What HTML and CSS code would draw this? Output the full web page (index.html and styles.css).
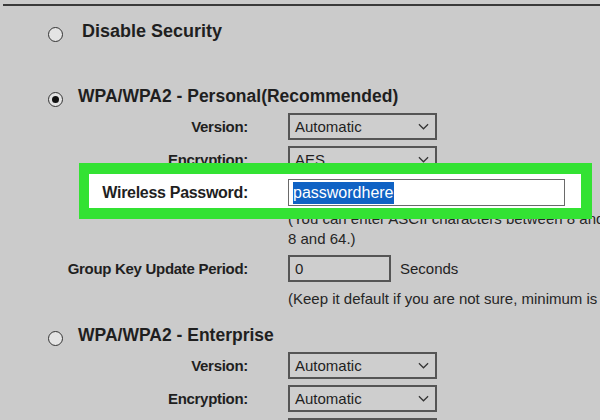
FILE: index.html
```html
<!DOCTYPE html>
<html lang="en">
  <head>
    <meta charset="UTF-8" />
    <meta name="viewport" content="width=device-width, initial-scale=1.0" />
    <title>Wireless Security</title>
    <link rel="stylesheet" href="styles.css">
  </head>
  <body>
    <div class="rule"></div>

    <div class="option option-first">
      <span class="radio"></span>
      <span class="option-title">Disable Security</span>
    </div>

    <div class="option option-personal">
      <span class="radio checked"></span>
      <span class="option-title">WPA/WPA2 - Personal(Recommended)</span>
    </div>

    <div class="field field-version">
      <label class="field-label">Version:</label>
      <div class="field-value">
        <div class="select">
          <span>Automatic</span>
          <svg class="chevron" viewBox="0 0 12 7"><polyline points="1,1 6,6 11,1" /></svg>
        </div>
      </div>
    </div>
    <div class="field">
      <label class="field-label">Encryption:</label>
      <div class="field-value">
        <div class="select">
          <span>AES</span>
          <svg class="chevron" viewBox="0 0 12 7"><polyline points="1,1 6,6 11,1" /></svg>
        </div>
      </div>
    </div>
    <div class="field field-highlight">
      <label class="field-label">Wireless Password:</label>
      <div class="field-value">
        <div class="text-input password-input"><span class="selected">passwordhere</span></div>
      </div>
    </div>
    <p class="hint hint-password">
      (You can enter ASCII characters between 8 and 63 or Hexadecimal characters between<br />
      8 and 64.)
    </p>
    <div class="field field-group">
      <label class="field-label">Group Key Update Period:</label>
      <div class="field-value">
        <div class="text-input period-input">0</div>
        <span class="unit">Seconds</span>
      </div>
    </div>
    <p class="hint hint-period">
      (Keep it default if you are not sure, minimum is 30, 0 means no update)
    </p>

    <div class="option option-enterprise">
      <span class="radio"></span>
      <span class="option-title">WPA/WPA2 - Enterprise</span>
    </div>

    <div class="field field-version">
      <label class="field-label">Version:</label>
      <div class="field-value">
        <div class="select">
          <span>Automatic</span>
          <svg class="chevron" viewBox="0 0 12 7"><polyline points="1,1 6,6 11,1" /></svg>
        </div>
      </div>
    </div>
    <div class="field">
      <label class="field-label">Encryption:</label>
      <div class="field-value">
        <div class="select">
          <span>Automatic</span>
          <svg class="chevron" viewBox="0 0 12 7"><polyline points="1,1 6,6 11,1" /></svg>
        </div>
      </div>
    </div>
    <div class="field">
      <span class="field-label"></span>
      <div class="field-value">
        <div class="text-input radius-input"></div>
      </div>
    </div>
  </body>
</html>
```

FILE: styles.css
```css
:root {
  --page-color: #cbcbcb;
  --text-color: #1f1f1f;
  --border-color: #555555;
  --mark-color: #33e233;
  --select-color: #0f62c4;
}
html,
body {
  overflow: hidden;
}
body {
  margin: 0;
  background-color: var(--page-color);
  color: var(--text-color);
  font-family: "Liberation Sans", Arial, sans-serif;
}
.rule {
  margin: 4px 0 0 3px;
  height: 2px;
  background-color: #3a3a3a;
}
.option {
  display: flex;
  align-items: center;
  height: 28px;
  padding-left: 48px;
  gap: 15px;
}
.option-first {
  margin-top: 11px;
  gap: 19px;
}
.option-personal {
  margin-top: 37px;
}
.option-enterprise {
  margin-top: 13px;
}
.option-title {
  font-size: 17.5px;
  font-weight: 700;
  white-space: nowrap;
}
.option-first .option-title {
  font-size: 18px;
}
.radio {
  width: 15px;
  height: 15px;
  margin-top: 6px;
  box-sizing: border-box;
  border: 1.5px solid #333;
  border-radius: 50%;
  background-color: #e4e4e4;
  display: flex;
  align-items: center;
  justify-content: center;
  flex-shrink: 0;
}
.radio.checked::after {
  content: "";
  width: 7px;
  height: 7px;
  border-radius: 50%;
  background-color: #111;
}
.field {
  display: grid;
  grid-template-columns: 248px 1fr;
  column-gap: 40px;
  align-items: center;
  height: 27px;
  margin-top: 6px;
}
.field-version {
  margin-top: 3px;
}
.field-label {
  text-align: right;
  font-size: 15px;
  font-weight: 700;
  letter-spacing: -0.3px;
  white-space: nowrap;
}
.field-value {
  display: flex;
  align-items: center;
  gap: 9px;
  height: 27px;
}
.select {
  width: 149px;
  height: 27px;
  box-sizing: border-box;
  border: 2px solid var(--border-color);
  background-color: #cecece;
  padding: 0 6px 0 5px;
  display: flex;
  align-items: center;
  justify-content: space-between;
  font-size: 15px;
}
.chevron {
  width: 11px;
  height: 7px;
  fill: none;
  stroke: #333;
  stroke-width: 1.3;
}
.text-input {
  height: 27px;
  box-sizing: border-box;
  border: 2px solid var(--border-color);
  background-color: #cecece;
  padding: 0 5px;
  display: flex;
  align-items: center;
  font-size: 15px;
}
.password-input {
  width: 277px;
  border: 1px solid #6a6a6a;
  background-color: #fff;
  padding: 0 4px;
  font-size: 16px;
}
.selected {
  background-color: var(--select-color);
  color: #fff;
  line-height: 22px;
}
.period-input {
  width: 103px;
}
.radius-input {
  width: 149px;
}
.unit {
  font-size: 15px;
}
.field-highlight {
  position: relative;
}
.field-highlight::before {
  content: "";
  position: absolute;
  top: -16px;
  bottom: -13px;
  left: 79px;
  right: 8px;
  background-color: #fff;
  border: 11px solid var(--mark-color);
  border-left-width: 10px;
}
.field-highlight > * {
  position: relative;
}
.field-highlight .field-label {
  font-size: 16px;
}
.hint {
  margin: 5px 0 0 288px;
  font-size: 15px;
  line-height: 19px;
  white-space: nowrap;
  color: #262626;
}
.hint-password {
  margin-top: 3px;
  line-height: 20px;
}
.hint-period {
  margin-top: 7px;
}
```
